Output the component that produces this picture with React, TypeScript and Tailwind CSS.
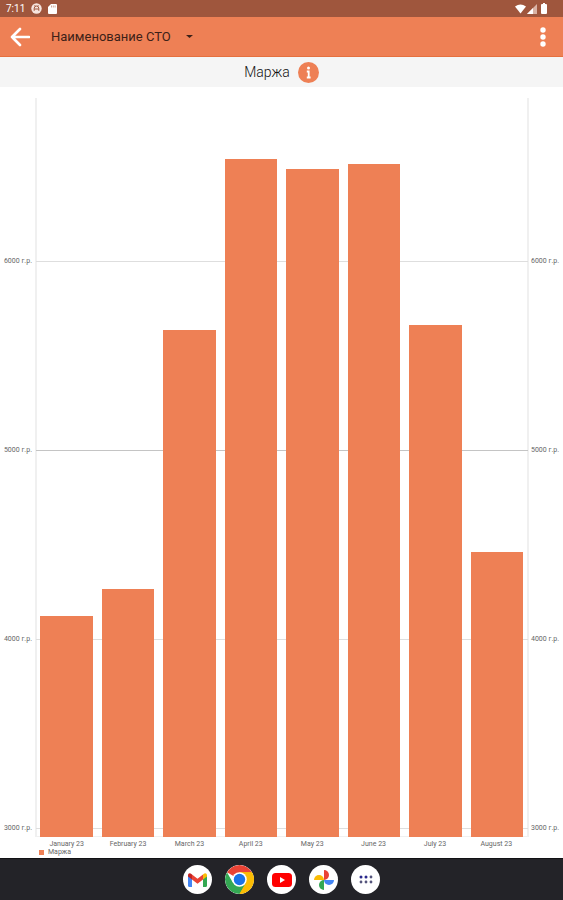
import React from "react";

type Bar = { month: string; value: number };

const bars: Bar[] = [
  { month: "January 23", value: 4122 },
  { month: "February 23", value: 4265 },
  { month: "March 23", value: 5632 },
  { month: "April 23", value: 6540 },
  { month: "May 23", value: 6484 },
  { month: "June 23", value: 6513 },
  { month: "July 23", value: 5659 },
  { month: "August 23", value: 4460 },
];

const ticks = [6000, 5000, 4000, 3000];
const MIN = 2952;
const MAX = 6862;
const percent = (value: number) => `${((value - MIN) / (MAX - MIN)) * 100}%`;

function StatusBar() {
  return (
    <div className="flex h-[17px] items-center bg-[#9f563d] pl-1.5 pr-4 text-white">
      <span className="text-[10px] leading-4">7:11</span>
      <svg className="ml-1.5 size-[11px]" viewBox="0 0 11 11" aria-hidden="true">
        <circle cx="5.5" cy="5.5" r="5.2" fill="#f6e5df" />
        <path d="M3.2 7.8V5.3a2.3 2.3 0 0 1 4.6 0v2.5M3.2 6h4.6M4.4 3.2l-.8-1M6.6 3.2l.8-1" stroke="#9f563d" fill="none" />
      </svg>
      <svg className="ml-1.5 h-[10px] w-[9px]" viewBox="0 0 9 10" aria-hidden="true">
        <path d="M3 0h5q1 0 1 1v8q0 1-1 1H1q-1 0-1-1V3z" fill="#fff" />
        <path d="M3.5 1.5v2M5.3 1.5v2M7.1 1.5v2" stroke="#c89482" strokeWidth=".8" />
      </svg>
      <svg className="ml-auto h-[10px] w-[11px]" viewBox="0 0 11 10" aria-hidden="true">
        <path d="M0 2.5Q5.5-1.5 11 2.5L5.5 9.5z" fill="#fff" />
      </svg>
      <svg className="ml-px size-[10px]" viewBox="0 0 10 10" aria-hidden="true">
        <path d="M0 10 10 0v10z" fill="#d9b3a6" />
        <path d="M0 10 6 4v6z" fill="#fff" />
      </svg>
      <svg className="ml-1 h-[11px] w-[6px]" viewBox="0 0 6 11" aria-hidden="true">
        <path d="M2 0h2v1h1q1 0 1 1v8q0 1-1 1H1q-1 0-1-1V2q0-1 1-1h1z" fill="#fff" />
      </svg>
    </div>
  );
}

function AppBar() {
  return (
    <header className="flex h-10 items-center border-b border-[#e5703f] bg-[#ee8055] px-2.5">
      <button type="button" aria-label="Назад">
        <svg className="block size-5" viewBox="0 0 20 20" fill="none" stroke="#fff" strokeWidth="2.6" strokeLinecap="round" strokeLinejoin="round">
          <path d="M19 10H2M10 2l-8 8 8 8" />
        </svg>
      </button>
      <div className="relative ml-[21px] flex items-center">
        <select
          aria-label="Станция"
          className="w-[142px] appearance-none bg-transparent font-[Roboto,sans-serif] text-[13px] leading-5 text-[#3d2118] outline-none"
        >
          <option>Наименование СТО</option>
        </select>
        <svg className="pointer-events-none absolute right-0 h-[3px] w-[7px]" viewBox="0 0 7 3" aria-hidden="true">
          <path d="M0 0h7L3.5 3z" fill="#3d2118" />
        </svg>
      </div>
      <button type="button" aria-label="Меню" className="ml-auto px-[7px]">
        <svg className="block h-5 w-1.5" viewBox="0 0 6 20" fill="#fff">
          <circle cx="3" cy="3" r="2.7" />
          <circle cx="3" cy="10" r="2.7" />
          <circle cx="3" cy="17" r="2.7" />
        </svg>
      </button>
    </header>
  );
}

function AxisLabels({ side }: { side: "left" | "right" }) {
  return (
    <div className={`relative shrink-0 ${side === "left" ? "w-9" : "w-[35px]"}`}>
      {ticks.map((tick) => (
        <span
          key={tick}
          className={`absolute translate-y-1/2 whitespace-nowrap text-[7px] leading-2 text-[#666] ${side === "left" ? "right-1" : "left-[3px]"}`}
          style={{ bottom: percent(tick) }}
        >
          {tick} г.р.
        </span>
      ))}
    </div>
  );
}

function Chart() {
  return (
    <section className="flex flex-1 flex-col bg-white pt-[11px]" aria-label="Маржа по месяцам">
      <div className="flex flex-1">
        <AxisLabels side="left" />
        <div className="relative flex flex-1">
          <div className="absolute inset-y-0 -left-px -right-px border-x-2 border-b border-[#f0f0f0]" />
          {ticks.map((tick) => (
            <div
              key={tick}
              className={`absolute inset-x-0 h-px translate-y-px ${tick === 5000 ? "bg-[#c4c4c4]" : "bg-[#dedede]"}`}
              style={{ bottom: percent(tick) }}
            />
          ))}
          {bars.map((bar) => (
            <div key={bar.month} className="relative flex flex-1 items-end pl-1 pr-[5px]">
              <div className="w-full bg-[#ee8055]" style={{ height: percent(bar.value) }} />
            </div>
          ))}
        </div>
        <AxisLabels side="right" />
      </div>
      <div className="flex px-9 pt-[3px]">
        {bars.map((bar) => (
          <span key={bar.month} className="flex-1 text-center text-[7px] leading-2 text-[#666]">
            {bar.month}
          </span>
        ))}
      </div>
      <div className="flex items-center gap-1 pb-0.5 pl-[39px]">
        <span className="size-[5px] bg-[#ee8055]" />
        <span className="text-[7px] leading-2 text-[#666]">Маржа</span>
      </div>
    </section>
  );
}

const dockButton = "flex size-[29px] items-center justify-center overflow-hidden rounded-full bg-white";

function Dock() {
  return (
    <nav className="flex h-[42px] items-center justify-center gap-[13px] border-t border-[#111114] bg-[#232328]" aria-label="Приложения">
      <button type="button" aria-label="Gmail" className={dockButton}>
        <svg className="h-[14px] w-[19px]" viewBox="0 0 19 14">
          <path d="M0 2v10.5Q0 14 1.5 14H4V5z" fill="#4285f4" />
          <path d="M19 2v10.5q0 1.500-1.500 1.500H15V5z" fill="#34a853" />
          <path d="M4 1.500 9.500 5.700 15 1.500V6.500L9.500 10.700 4 6.500z" fill="#ea4335" />
          <path d="M0 2.200C0 .2 2 -.4 3.400.9L4 1.500v5L0 3.500z" fill="#c5221f" />
          <path d="M19 2.200C19 .2 17-.4 15.600.9L15 1.500v5l4-3z" fill="#fbbc04" />
        </svg>
      </button>
      <button type="button" aria-label="Chrome" className={dockButton}>
        <svg className="size-[29px]" viewBox="0 0 28 28">
          <path d="M14 14 1.880 7A14 14 0 0 1 26.120 7z" fill="#ea4335" />
          <path d="M14 14V7h12.120A14 14 0 0 1 14 28z" fill="#fbbc04" />
          <path d="M14 28A14 14 0 0 1 1.880 7L7.940 17.500 14 14l6.060 3.500z" fill="#34a853" />
          <path d="M20.060 17.500 14 28A14 14 0 0 0 26.120 7H14z" fill="#fbbc04" />
          <circle cx="14" cy="14" r="7" fill="#fff" />
          <circle cx="14" cy="14" r="5.500" fill="#1a73e8" />
        </svg>
      </button>
      <button type="button" aria-label="YouTube" className={dockButton}>
        <svg className="h-[14px] w-5" viewBox="0 0 20 14">
          <rect width="20" height="14" rx="3.500" fill="#f00" />
          <path d="M8 4v6l5-3z" fill="#fff" />
        </svg>
      </button>
      <button type="button" aria-label="Фото" className={dockButton}>
        <svg className="size-5" viewBox="0 0 20 20">
          <path d="M10 10V0a5 5 0 0 1 0 10z" fill="#ea4335" />
          <path d="M10 10h10a5 5 0 0 1-10 0z" fill="#4285f4" />
          <path d="M10 10v10a5 5 0 0 1 0-10z" fill="#34a853" />
          <path d="M10 10H0a5 5 0 0 1 10 0z" fill="#fbbc04" />
        </svg>
      </button>
      <button type="button" aria-label="Все приложения" className={dockButton}>
        <svg className="h-[9px] w-[14px]" viewBox="0 0 14 9">
          <g fill="#29288c">
            <circle cx="2" cy="2" r="1.500" />
            <circle cx="7" cy="2" r="1.500" />
          </g>
          <g fill="#55557c">
            <circle cx="12" cy="2" r="1.400" />
            <circle cx="2" cy="7" r="1.400" />
            <circle cx="7" cy="7" r="1.400" />
            <circle cx="12" cy="7" r="1.400" />
          </g>
        </svg>
      </button>
    </nav>
  );
}

export default function App() {
  return (
    <div className="flex min-h-screen flex-col bg-white font-[Roboto,sans-serif]">
      <StatusBar />
      <AppBar />
      <div className="flex h-[30px] items-center justify-center gap-2 bg-[#f5f5f5]">
        <h1 className="text-[14px] leading-5 font-light text-[#111]">Маржа</h1>
        <button type="button" aria-label="Информация">
          <svg className="block size-[21px]" viewBox="0 0 21 21">
            <circle cx="10.500" cy="10.500" r="10.500" fill="#ee8055" />
            <circle cx="10.500" cy="6" r="1.500" fill="#fff" />
            <path d="M8.800 9.500h1.900V15.500M8.800 15.500h3.800" stroke="#fff" strokeWidth="1.800" fill="none" />
          </svg>
        </button>
      </div>
      <Chart />
      <Dock />
    </div>
  );
}
